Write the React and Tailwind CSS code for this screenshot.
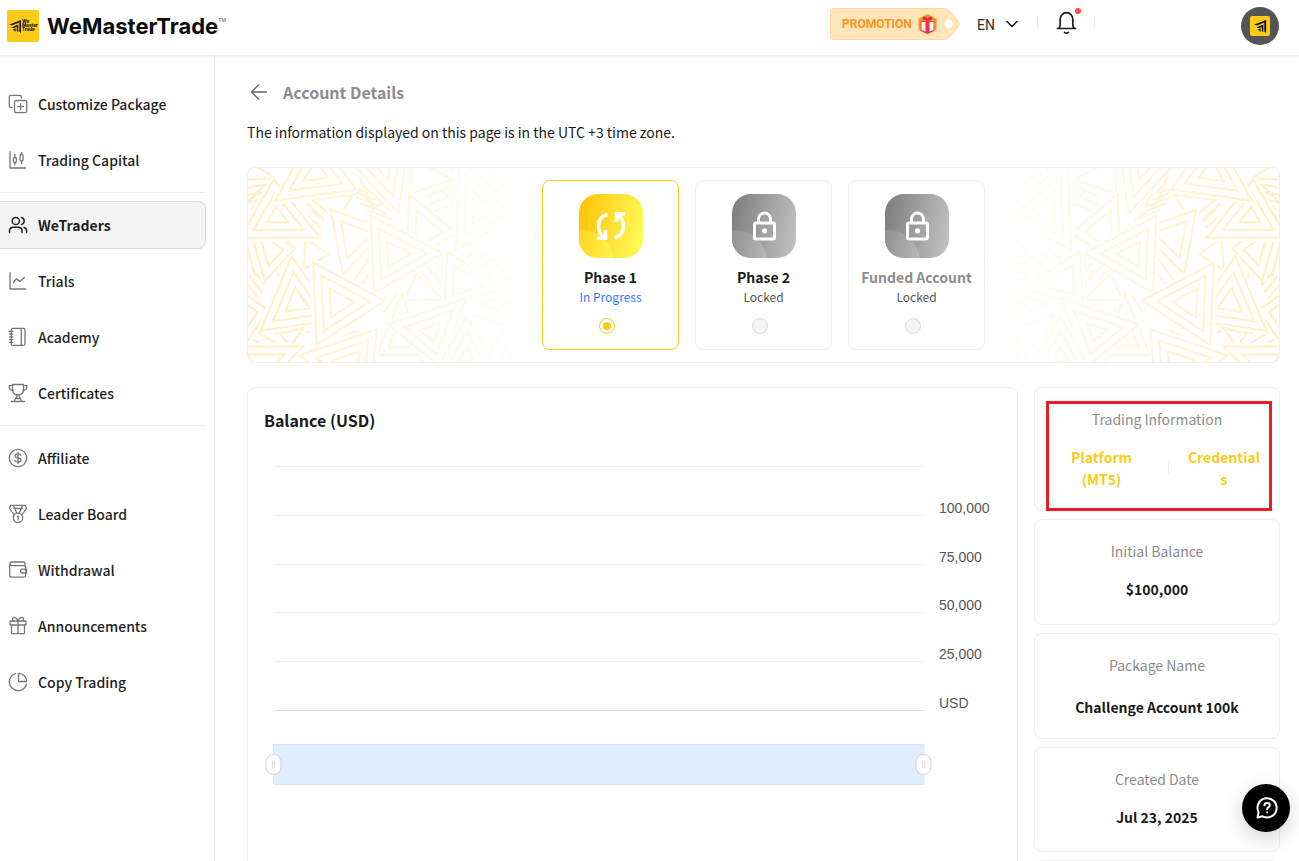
import React from 'react';

const line = { fill: 'none', stroke: 'currentColor', strokeWidth: 1.3, strokeLinecap: 'round', strokeLinejoin: 'round' };

function Icon({ children, size = 20, ...rest }) {
  return (
    <svg width={size} height={size} viewBox="0 0 20 20" className="shrink-0" {...line} {...rest}>
      {children}
    </svg>
  );
}

const icons = {
  customize: (
    <Icon>
      <path d="M4 13.5H3a1.7 1.7 0 0 1-1.7-1.7V3A1.7 1.7 0 0 1 3 1.3h8.8A1.7 1.7 0 0 1 13.500 3v1" />
      <rect x="6.5" y="6.500" width="12.200" height="12.200" rx="1.700" />
      <path d="M12.600 9.700v5.800M9.700 12.600h5.800" />
    </Icon>
  ),
  capital: (
    <Icon>
      <path d="M2 2v16h15.500" strokeLinecap="square" />
      <rect x="5.400" y="7.500" width="3" height="5" rx="1.200" />
      <path d="M6.900 4.500v3M6.900 12.500v2M13.600 2.500v2M13.600 11v2.500" />
      <rect x="12.100" y="4.500" width="3" height="6.500" rx="1.200" />
    </Icon>
  ),
  traders: (
    <Icon strokeWidth="1.5">
      <circle cx="7.800" cy="6" r="3.600" />
      <path d="M1.500 17.500v-2a3.500 3.500 0 0 1 3.500-3.200h5.500a3.500 3.500 0 0 1 3.500 3.200v2" />
      <path d="M13.500 2.600a3.500 3.500 0 0 1 0 6.800M16 12.500a3.400 3.400 0 0 1 2.600 3.200v1.800" />
    </Icon>
  ),
  trials: (
    <Icon>
      <path d="M2 2v16h15.500" strokeLinecap="square" />
      <path d="M5.500 11.500l3-3.800 3.300 2.700 4.500-4" />
    </Icon>
  ),
  academy: (
    <Icon>
      <rect x="3.300" y="1.400" width="13.700" height="17" rx="1.500" />
      <path d="M13.300 1.400v17M1.500 4.500h3.300M1.500 7.200h3.300M1.500 9.900h3.300M1.500 12.600h3.300M1.500 15.300h3.300" />
    </Icon>
  ),
  certificates: (
    <Icon>
      <path d="M4.500 1.500h11v4.800c0 3.500-2 5.700-5.500 5.700S4.500 9.800 4.500 6.300z" />
      <path d="M4.500 2.700H1.300v2c0 1.500 1.200 2.500 3.400 2.500M15.500 2.700h3.200v2c0 1.500-1.200 2.500-3.400 2.500M8.800 12v1.800L6 18.500M11.200 12v1.800L14 18.500M7.600 15.500h4.800M3.500 18.500h13" />
    </Icon>
  ),
  affiliate: (
    <Icon>
      <circle cx="10" cy="10" r="8.700" />
      <path d="M13 7.300c-.5-1-1.600-1.400-3-1.400-1.700 0-2.900.7-2.900 2 0 3 6 1.200 6 4.200 0 1.300-1.300 2-3.100 2-1.500 0-2.700-.5-3.200-1.600M10 4.500v11" />
    </Icon>
  ),
  leader: (
    <Icon>
      <circle cx="10" cy="13.800" r="4.700" />
      <path d="M6.200 11L1.400 4.200 2.800 1.300h14.400l1.400 2.900-4.800 6.800M5.500 1.500l3.300 7.700M14.500 1.500l-3.300 7.700M5.500 4.300h9M9.400 12.600l.8-.5v3.300" />
    </Icon>
  ),
  withdrawal: (
    <Icon>
      <path d="M17 6V3.500A1.500 1.500 0 0 0 15.500 2h-12a1.900 1.900 0 0 0 0 3.700h12.700A1.500 1.500 0 0 1 17.700 7.200v8.500a1.500 1.500 0 0 1-1.500 1.500H3.500a1.800 1.800 0 0 1-1.800-1.800V3.900" />
      <path d="M18.500 9.200h-4a1.900 1.900 0 0 0 0 3.800h4z" />
    </Icon>
  ),
  announcements: (
    <Icon>
      <rect x="2" y="5" width="16" height="4" rx=".8" />
      <path d="M3.500 9v7.700a1 1 0 0 0 1 1h11a1 1 0 0 0 1-1V9M10 5v12.700M10 5C9 2.500 7.500 1.200 5.800 1.500 4 1.900 4 4 5 5M10 5c1-2.500 2.500-3.800 4.200-3.500C16 1.900 16 4 15 5" />
    </Icon>
  ),
  copy: (
    <Icon>
      <path d="M7.500 1.600a8.700 8.700 0 1 0 10.900 10.900M10.500 1.300v8.200h8.200a8.200 8.200 0 0 0-8.200-8.200z" />
    </Icon>
  ),
};

const menu = [
  [
    { label: 'Customize Package', icon: 'customize' },
    { label: 'Trading Capital', icon: 'capital' },
  ],
  [
    { label: 'WeTraders', icon: 'traders', active: true },
    { label: 'Trials', icon: 'trials' },
    { label: 'Academy', icon: 'academy' },
    { label: 'Certificates', icon: 'certificates' },
  ],
  [
    { label: 'Affiliate', icon: 'affiliate' },
    { label: 'Leader Board', icon: 'leader' },
    { label: 'Withdrawal', icon: 'withdrawal' },
    { label: 'Announcements', icon: 'announcements' },
    { label: 'Copy Trading', icon: 'copy' },
  ],
];

function ArrowMark() {
  return (
    <>
      <path d="M0 5L13 0v14l-1.800-1.500V2.800L3.500 5.600z" />
      <path d="M2.500 8L10 4.800v8.500l-1.600-1.500V7.200L5.500 8.500z" />
      <path d="M4 10.500L7.200 9v3.800L6 11.700z" />
    </>
  );
}

function Header() {
  return (
    <header className="relative z-10 flex h-[55px] shrink-0 items-start bg-white shadow-[0_1px_3px_rgba(0,0,0,0.12)]">
      <div className="flex items-center pt-[10px] pl-[7px]">
        <div className="flex size-8 items-center gap-px rounded-[2px] bg-[#fbcb17] pl-[2px] text-[#1a1a1a]">
          <svg width="12" height="13" viewBox="0 0 13 14" fill="currentColor"><ArrowMark /></svg>
          <div className="font-['Inter',sans-serif] text-[4.500px] leading-[4px] font-extrabold">We<br />Master<br />Trade</div>
        </div>
        <div className="ml-2 flex font-['Inter',sans-serif] text-[22px] leading-8 font-bold tracking-[0.02px] text-[#0c0c0c]">
          WeMasterTrade
          <span className="mt-[-6px] text-[5px] leading-8 font-normal tracking-normal text-[#555]">TM</span>
        </div>
      </div>

      <div className="ml-auto flex items-start pr-5">
        <div className="relative mt-2 h-8 w-[130px]">
          <svg width="130" height="32" viewBox="0 0 130 32" className="absolute inset-0">
            <path d="M3 .5h111q3 0 5 2l10 11.500q1.500 2 0 4l-10 11.500q-2 2-5 2H3Q.5 31.500.5 29V3Q.5.500 3 .500z" fill="#ffe5b8" stroke="#fcd9a0" />
            <circle cx="118.500" cy="16" r="4" fill="#fff" />
            <path d="M97.500 6l9 4.700v10.600l-9 4.900-9-4.900V10.700z" fill="#f79a1c" />
            <path d="M90.500 13h14v10l-7 3-7-3z" fill="#ef4b3f" />
            <path d="M91.500 14h4.200v9.500l-4.200-1.500zM99.300 14h4.200v8l-4.200 1.500z" fill="#fff3e6" />
            <path d="M97.500 11.500c-1-3-5-3-4.500-1 .3 1.200 2.500 1.500 4.500 1zm0 0c1-3 5-3 4.500-1-.3 1.200-2.500 1.500-4.500 1z" fill="#e91e63" stroke="#e91e63" />
            <path d="M95.700 12h3.600v13h-3.600z" fill="#e8305a" />
          </svg>
          <span className="relative ml-3 font-['Roboto',sans-serif] text-[12px] leading-8 font-bold text-[#ff9320]">PROMOTION</span>
        </div>
        <span className="mt-[14px] ml-[17px] font-['Roboto',sans-serif] text-[14px] leading-[22px] text-[#303030]">EN</span>
        <svg width="12" height="8" viewBox="0 0 12 8" className="mt-5 ml-[11px]" {...line} strokeWidth="1.500"><path d="M1 1.500l5 5 5-5" /></svg>
        <span className="mt-4 ml-[19px] h-[13px] w-px bg-[#ededed]" />
        <div className="relative mt-[11px] ml-[18px] text-[#1a1a1a]">
          <svg width="21" height="24" viewBox="0 0 21 24" {...line} strokeWidth="1.700">
            <path d="M1.500 17.500h18M3 17.200c1-1 1.200-2.500 1.200-4.200V8a6.300 6.300 0 0 1 12.600 0v5c0 1.700.2 3.200 1.200 4.200M8.600 21.300c1.200 1 2.600 1 3.800 0" />
          </svg>
          <span className="absolute -top-[3px] right-[-4px] size-[6px] rounded-full bg-[#ff4d4f]" />
        </div>
        <span className="mt-4 ml-[17px] h-[13px] w-px bg-[#ededed]" />
        <div className="mt-[7px] ml-[146px] flex size-[38px] items-center justify-center rounded-full bg-[#555]">
          <div className="flex size-5 items-center justify-center rounded-[2px] bg-[#fbcb17] text-black">
            <svg width="13" height="13" viewBox="0 0 14 14" fill="currentColor"><ArrowMark /></svg>
          </div>
        </div>
      </div>
    </header>
  );
}

function Sidebar() {
  return (
    <aside className="flex w-[215px] shrink-0 flex-col gap-2 border-r border-[#ededed] pt-[25px] pr-2">
      {menu.map((group, i) => (
        <React.Fragment key={i}>
          {i > 0 && <hr className="border-[#efefef]" />}
          {group.map((item) => (
            <a
              key={item.label}
              className={`flex h-12 items-center gap-[10px] pl-2 text-[14px] ${
                item.active
                  ? 'rounded-r-lg border border-l-0 border-[#d9d9d9] bg-[#f4f4f4] font-bold text-[#1f1f1f]'
                  : 'font-medium text-[#1f1f1f]'
              }`}
            >
              <span className={item.active ? 'text-[#222]' : 'text-[#777]'}>{icons[item.icon]}</span>
              <span className="pb-px leading-[22px]">{item.label}</span>
            </a>
          ))}
        </React.Fragment>
      ))}
    </aside>
  );
}

// outer corners, painted back to front; smaller copies are inset evenly inside each
const triangles = [
  [15, 430, 75, 632, 165, 535],
  [197, 505, 264, 553, 190, 600],
  [-30, 640, 85, 720, -10, 860],
  [20, 270, 105, 325, -20, 330],
  [0, 503, 240, 503, 102, 329],
  [215, 388, 340, 375, 290, 450],
  [510, 190, 475, 430, 285, 225],
  [515, 265, 637, 328, 512, 372],
  [690, 230, 820, 290, 700, 360],
  [272, 418, 440, 480, 308, 612],
  [508, 373, 648, 490, 500, 580],
  [658, 270, 850, 430, 648, 540],
  [765, 570, 865, 440, 900, 610],
  [530, 612, 492, 690, 607, 688],
  [622, 545, 795, 655, 613, 705],
  [725, 700, 890, 640, 850, 760],
  [700, 735, 800, 770, 745, 850],
  [840, 740, 770, 890, 910, 890],
  [155, 560, 290, 750, 62, 782],
  [105, 392, 348, 358, 220, 185],
  [487, 672, 545, 855, 410, 855],
  [120, 790, 190, 775, 150, 830],
  [-20, 830, 190, 830, 60, 960],
  [392, 437, 607, 550, 402, 668],
  [220, 578, 435, 692, 230, 825],
  [678, 685, 445, 763, 600, 890],
  [410, 778, 178, 856, 390, 1010],
  [680, 740, 575, 920, 785, 920],
];

// short parallel strokes filling the gaps: x1, y1, x2, y2, step x, step y, count
const hatches = [
  [22, 330, 110, 318, 0, 22, 4],
  [20, 400, 75, 345, 12, 20, 4],
  [200, 400, 250, 445, 22, -8, 4],
  [205, 440, 245, 475, 8, -20, 4],
  [350, 300, 400, 420, 25, -8, 5],
  [350, 360, 450, 450, 12, -20, 4],
  [560, 380, 640, 345, 8, 24, 3],
  [590, 350, 650, 400, 14, -18, 4],
  [380, 420, 460, 450, -18, -20, 5],
  [20, 640, 60, 690, 8, -22, 3],
  [325, 610, 385, 520, 18, 20, 4],
  [585, 600, 610, 660, 18, -22, 3],
  [540, 600, 600, 680, 20, -14, 4],
  [690, 300, 760, 390, 25, -10, 5],
  [25, 800, 110, 850, 25, -15, 5],
  [270, 800, 330, 770, 22, 12, 5],
  [430, 730, 470, 670, 16, 14, 4],
  [545, 800, 600, 860, -14, 20, 3],
  [650, 590, 720, 530, 24, 14, 6],
  [780, 560, 870, 560, 0, 22, 4],
  [20, 520, 45, 620, 24, 0, 4],
];

const INSET = 23;

// shrinks the triangle towards its incenter, so all three bands keep one width
function nested([ax, ay, bx, by, cx, cy]) {
  const a = Math.hypot(bx - cx, by - cy);
  const b = Math.hypot(ax - cx, ay - cy);
  const c = Math.hypot(ax - bx, ay - by);
  const sum = a + b + c;
  const ix = (a * ax + b * bx + c * cx) / sum;
  const iy = (a * ay + b * by + c * cy) / sum;
  const r = Math.abs((bx - ax) * (cy - ay) - (cx - ax) * (by - ay)) / sum;
  const out = [];
  for (let d = 0; r - d > 13 && out.length < 3; d += INSET) {
    const k = 1 - d / r;
    out.push([[ax, ay], [bx, by], [cx, cy]].map(([x, y]) => `${(ix + (x - ix) * k).toFixed(1)},${(iy + (y - iy) * k).toFixed(1)}`).join(' '));
  }
  return out;
}

function Pattern({ id, className }) {
  return (
    <svg width="292" height="194" viewBox="24 294 876 582" className={className}>
      <defs>
        <linearGradient id={id}>
          <stop offset="0" stopColor="#fff" stopOpacity="0" />
          <stop offset="1" stopColor="#fff" />
        </linearGradient>
      </defs>
      <g fill="none" stroke="#fff0c6" strokeWidth="7">
        {hatches.map(([x1, y1, x2, y2, dx, dy, n], i) =>
          Array.from({ length: n }, (_, k) => (
            <line key={`${i}-${k}`} x1={x1 + dx * k} y1={y1 + dy * k} x2={x2 + dx * k} y2={y2 + dy * k} />
          ))
        )}
        {triangles.map((t, i) => {
          const rings = nested(t);
          return (
            <g key={i}>
              <polygon points={rings[0]} fill="#fff" stroke="#fff" strokeWidth="22" strokeLinejoin="bevel" />
              {rings.map((points) => <polygon key={points} points={points} />)}
            </g>
          );
        })}
      </g>
      <rect x="24" y="294" width="876" height="582" fill={`url(#${id})`} />
    </svg>
  );
}

const phases = [
  { title: 'Phase 1', status: 'In Progress', active: true },
  { title: 'Phase 2', status: 'Locked' },
  { title: 'Funded Account', status: 'Locked', muted: true },
];

function PhaseBadge({ active, id }) {
  return (
    <svg width="64" height="64" viewBox="0 0 64 64">
      <defs>
        <linearGradient id={id} x1="0" y1="0.4" x2="1" y2="0.600">
          <stop offset="0" stopColor={active ? '#ffc40a' : '#808080'} />
          <stop offset="1" stopColor={active ? '#fffb57' : '#bfbfbf'} />
        </linearGradient>
        <clipPath id={`${id}-clip`}><rect width="64" height="64" rx="19" /></clipPath>
      </defs>
      <g clipPath={`url(#${id}-clip)`}>
        <rect width="64" height="64" fill={`url(#${id})`} />
        <circle cx="3" cy="68" r="32" fill={`url(#${id})`} opacity=".75" />
      </g>
      {active ? (
        <g fill="none" stroke="#fff" strokeWidth="3.500">
          <path d="M28.500 20.500C22 22 19.500 27 19.500 32c0 5.500 2.500 9.500 6.500 12M18 44.300h8.500V36" />
          <path d="M35.500 43.800C42 42 44.500 37 44.500 32c0-5.500-2.500-9.500-6.500-12M46 19.700h-8.500V28" />
        </g>
      ) : (
        <g fill="none" stroke="#fff" strokeWidth="3">
          <rect x="22.500" y="29" width="20" height="16" rx="1.500" />
          <path d="M26.500 29v-4a6 6 0 0 1 12 0v4" />
          <circle cx="32.500" cy="36.800" r="2.600" fill="#fff" stroke="none" />
        </g>
      )}
    </svg>
  );
}

function PhaseCard({ title, status, active, muted }) {
  return (
    <div className={`flex h-[170px] w-[137px] flex-col items-center rounded-lg border bg-white pt-[13px] ${active ? 'border-[#fbcb17]' : 'border-[#efefef]'}`}>
      <PhaseBadge active={active} id={title.replace(' ', '')} />
      <div className={`mt-2 text-[14px] leading-[22px] font-bold whitespace-nowrap ${muted ? 'text-[#8c8c8c]' : 'text-[#1a1a1a]'}`}>{title}</div>
      <div className={`text-[12px] leading-[18px] ${active ? 'text-[#2f7bff]' : 'text-[#555]'}`}>{status}</div>
      <div className={`mt-3 mr-[7px] flex size-4 items-center justify-center rounded-full border ${active ? 'border-[#fbcb17] bg-white' : 'border-[#d9d9d9] bg-[#f4f4f4]'}`}>
        {active && <span className="size-2 rounded-full bg-[#fbcb17]" />}
      </div>
    </div>
  );
}

const ticks = [
  { y: 508, label: '100,000' },
  { y: 557, label: '75,000' },
  { y: 605, label: '50,000' },
  { y: 654, label: '25,000' },
  { y: 703, label: 'USD' },
];

function Handle({ x }) {
  return (
    <g stroke="#d4d4d4">
      <rect x={x - 7.5} y="754.500" width="15" height="20" rx="7.500" fill="#fff" />
      <path d={`M${x - 1} 760.500v8M${x + 1} 760.500v8`} strokeWidth=".8" />
    </g>
  );
}

function BalanceChart() {
  return (
    <svg width="769" height="400" viewBox="248 440 769 400" className="block">
      {[466.5, 515.5, 564.5, 612.5, 661.5].map((y) => (
        <path key={y} d={`M274 ${y}H924`} stroke="#efefef" />
      ))}
      <path d="M274 710.500H924" stroke="#dedede" />
      <g fill="#555" fontSize="14" fontFamily="'Liberation Sans', Arial, sans-serif">
        {ticks.map((t) => (
          <text key={t.label} x="939" y={t.y + 5}>{t.label}</text>
        ))}
      </g>
      <rect x="273.500" y="744.500" width="650.500" height="40" fill="#e0edff" stroke="#dbe6f5" />
      <Handle x={273.5} />
      <Handle x={923.5} />
    </svg>
  );
}

function InfoCard({ label, value, className }) {
  return (
    <div className={`flex flex-col items-center rounded-lg border border-[#efefef] bg-white pt-5 text-[14px] leading-[22px] ${className}`}>
      <div className="text-[#8c8c8c]">{label}</div>
      {value}
    </div>
  );
}

export default function App() {
  return (
    <div className="flex h-[861px] w-full flex-col overflow-hidden bg-white font-['Noto_Sans_CJK_SC','Noto_Sans',sans-serif] text-[#1a1a1a]">
      <Header />
      <div className="flex min-h-0 flex-1">
        <Sidebar />
        <main className="min-w-0 flex-1 pt-[25px] pr-[19px] pl-8">
          <div className="flex h-6 items-center pl-[3px]">
            <svg width="17" height="16" viewBox="0 0 17 16" className="text-[#666]" {...line} strokeWidth="1.400"><path d="M16.500 8h-15M8.500 1l-7 7 7 7" /></svg>
            <h1 className="ml-4 text-[16px] leading-6 font-bold text-[#8c8c8c]">Account Details</h1>
          </div>
          <p className="mt-[17px] text-[14px] leading-[22px]">The information displayed on this page is in the UTC +3 time zone.</p>

          <section className="relative mt-6 flex h-[196px] justify-center gap-4 overflow-hidden rounded-lg border border-[#efefef] pt-3">
            <Pattern id="fade-left" className="absolute top-0 left-0" />
            <Pattern id="fade-right" className="absolute top-0 right-0 -scale-x-100" />
            {phases.map((p) => <PhaseCard key={p.title} {...p} />)}
          </section>

          <div className="mt-6 flex gap-4">
            <section className="h-[520px] flex-1 rounded-lg border border-[#efefef]">
              <h2 className="h-[52px] pt-5 pl-4 text-[16px] leading-6 font-bold">Balance (USD)</h2>
              <BalanceChart />
            </section>

            <div className="flex w-[246px] flex-col gap-2">
              <div className="relative">
                <InfoCard
                  className="h-[124px]"
                  label="Trading Information"
                  value={
                    <div className="mt-4 flex w-full items-center font-bold text-[#fbcb17]">
                      <div className="flex-1 text-center">Platform<br />(MT5)</div>
                      <span className="mt-[-2px] h-[13px] w-px bg-[#ededed]" />
                      <div className="w-[110px] text-center">Credential<br />s</div>
                    </div>
                  }
                />
                {/* highlight around the login details */}
                <div className="absolute top-[14px] left-3 h-[110px] w-[226px] border-3 border-[#ed1c24]" />
              </div>
              <InfoCard className="h-[106px]" label="Initial Balance" value={<b className="mt-4">$100,000</b>} />
              <InfoCard className="h-[106px]" label="Package Name" value={<b className="mt-5">Challenge Account 100k</b>} />
              <InfoCard className="h-[105px]" label="Created Date" value={<b className="mt-4">Jul 23, 2025</b>} />
              <InfoCard className="h-[106px]" label="" value={null} />
            </div>
          </div>
        </main>
      </div>

      <button className="fixed right-[9px] bottom-[29px] z-20 flex size-12 items-center justify-center rounded-full bg-black pl-px text-white shadow-[0_6px_20px_rgba(0,0,0,0.18)]">
        <svg width="24" height="24" viewBox="0 0 24 24" {...line} strokeWidth="2">
          <path d="M2.500 21.500l1.100-5.200A9.600 9.600 0 1 1 7.600 20.300z" />
          <path d="M9.500 9.300c.2-3.200 5.300-3 5.300-.1 0 2-2.600 2.100-2.600 4M12.200 16.300v.2" />
        </svg>
      </button>
    </div>
  );
}
